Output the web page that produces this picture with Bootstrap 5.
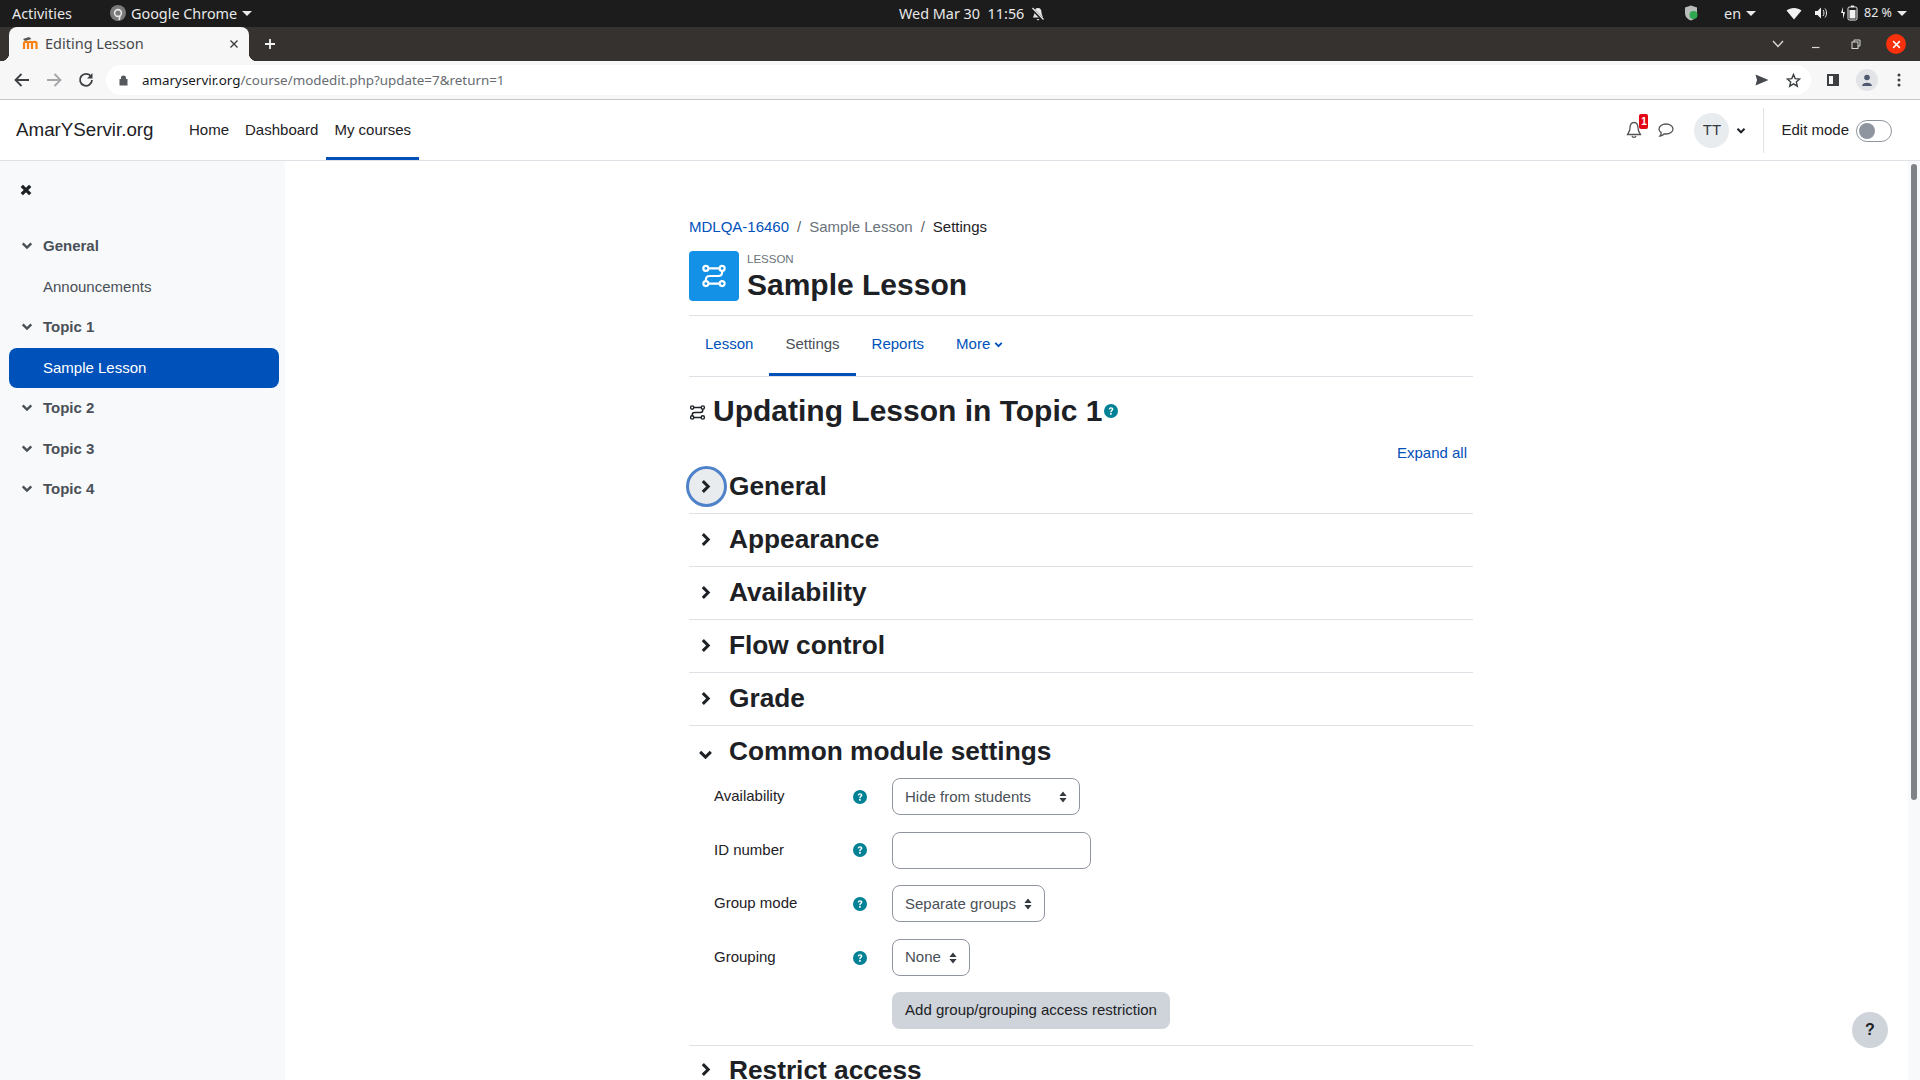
<!DOCTYPE html>
<html lang="en">
<head>
<meta charset="utf-8">
<title>Editing Lesson</title>
<link href="https://cdn.jsdelivr.net/npm/bootstrap@5.3.3/dist/css/bootstrap.min.css" rel="stylesheet">
<script src="https://cdn.jsdelivr.net/npm/bootstrap@5.3.3/dist/js/bootstrap.bundle.min.js"></script>
<style>
body { font-family: "Liberation Sans", Arial, sans-serif; font-size: 15px; color: #1d2125; background: #fff; overflow: hidden; width: 1920px; height: 1080px; }
a { text-decoration: none; color: #0051ba; }

/* desktop bar */
.os-bar { height: 27px; background: #1c1c1c; color: #e8e8e8; font-family: "Noto Sans", sans-serif; font-size: 14.4px; padding: 0 13px 0 12px; }
.os-left { width: 887px; }
.os-chrome-ico { margin-left: 38px; margin-right: 5px; }
.os-bell { margin-left: 6px; }
.os-caret { width: 0; height: 0; border-left: 5px solid transparent; border-right: 5px solid transparent; border-top: 5px solid #e8e8e8; display: inline-block; margin-left: 5px; }
.os-lang { margin-left: 26px; }
.os-gap-a { margin-left: 30px; }
.os-gap-b { margin-left: 12px; }
.os-batt-text { font-size: 12.5px; margin-left: 4px; }

/* browser chrome */
.tab-strip { height: 34px; background: #35322f; padding: 0 14px 0 9px; }
.browser-tab { width: 240px; height: 34px; background: #f7f7f7; border-radius: 8px 8px 0 0; color: #45474a; font-family: "Noto Sans", sans-serif; font-size: 14.5px; padding: 0 10px 0 13px; position: relative; }
.browser-tab::before, .browser-tab::after { content: ""; position: absolute; bottom: 0; width: 8px; height: 8px; }
.browser-tab::before { left: -8px; background: radial-gradient(circle at 0 0, #35322f 8px, #f7f7f7 8.5px); }
.browser-tab::after { right: -8px; background: radial-gradient(circle at 100% 0, #35322f 8px, #f7f7f7 8.5px); }
.tab-title { margin-left: 7px; }
.new-tab { margin-left: 15px; }
.win-min { margin-left: 27px; }
.win-max { margin-left: 30px; }
.win-close { width: 20px; height: 20px; border-radius: 50%; background: #f8300c; margin-left: 25px; }
.tool-row { height: 39px; background: #f7f7f7; border-bottom: 1px solid #c6c6c6; padding-left: 14px; }
.tool-fwd { margin-left: 16px; }
.tool-reload { margin-left: 16px; }
.omni { width: 1705px; height: 30px; margin-left: 12px; background: #fff; border-radius: 15px; padding: 0 10px 0 13px; font-family: "Noto Sans", sans-serif; font-size: 13.4px; color: #676b70; flex: none; }
.omni b { font-weight: 400; color: #15171a; }
.omni-url { margin-left: 14px; }
.omni-star { margin-left: 17px; }
.tool-panel { margin-left: 16px; }
.profile-dot { width: 22px; height: 22px; border-radius: 50%; background: #e3e4e8; margin-left: 17px; }
.tool-dots { margin-left: 19px; }

/* moodle navbar */
.top-nav { height: 61px; border-bottom: 1px solid #dee2e6; padding: 0 28px 0 16px; }
.site-name { font-size: 18.75px; color: #1d2125; width: 165px; }
.top-link { color: #1d2125; padding: 0 8px; height: 60px; display: flex; align-items: center; }
.top-link.on { border-bottom: 3px solid #0051ba; padding-top: 3px; }
.note-badge { position: absolute; left: 13px; top: -7px; width: 9px; height: 15px; background: #e30613; color: #fff; font-size: 10px; font-weight: 700; line-height: 15px; text-align: center; border-radius: 2px; }
.nav-chat { margin-left: 16px; }
.user-pic { width: 35px; height: 35px; border-radius: 50%; background: #e9ecef; color: #343a40; margin-left: 20px; }
.user-chev { margin-left: 7px; }
.bar-sep { width: 1px; height: 45px; background: #dee2e6; margin: 0 17px; }
.mode-switch { width: 36px; height: 22px; border: 1px solid #8f959e; border-radius: 11px; margin: 2px 0 0 7px; padding: 2px; }
.mode-knob { width: 16px; height: 16px; border-radius: 50%; background: #8f959e; }

/* layout */
.page-body { height: 919px; }
.side-drawer { width: 285px; background: #f8f9fa; padding: 0 6px 0 9px; color: #495057; }
.drawer-close { height: 65px; padding: 17px 0 0 11px; }
.drawer-row { height: 40.5px; display: flex; align-items: center; padding-left: 34px; position: relative; }
.drawer-row.topic { font-weight: 700; }
.drawer-row svg { position: absolute; left: 12px; top: 15px; }
.drawer-row.sel { background: #0051ba; color: #fff; border-radius: 8px; }
.page-scroll { width: 12px; background: #f8f9fa; position: relative; }
.page-thumb { position: absolute; left: 3px; top: 3px; width: 6px; height: 636px; background: #7f8387; border-radius: 3px; }
.page-main { flex: 1 1 auto; }
.page-col { width: 784px; margin-left: 404px; }

.crumb-trail { --bs-breadcrumb-margin-bottom: 17px; --bs-breadcrumb-item-active-color: #6a737b; padding-top: 57px; height: 90px; line-height: 18px; margin: 0; }
.crumb-trail .breadcrumb-item { color: #6a737b; }
.crumb-trail .crumb-now { color: #1d2125; }
.head-row { height: 65px; border-bottom: 1px solid #dee2e6; }
.mod-tile { width: 50px; height: 50px; background: #1391e6; border-radius: 4px; margin-right: 8px; }
.mod-kind { font-size: 11.5px; color: #6a737b; line-height: 12px; margin-top: 2px; }
.mod-name { font-size: 30px; font-weight: 700; line-height: 36px; margin: 2px 0 0; }
.sub-tabs { height: 61px; border-bottom: 1px solid #dee2e6; }
.sub-tabs a { padding: 0 16px 3px; height: 60px; display: flex; align-items: center; }
.sub-tabs a.on { color: #495057; border-bottom: 3px solid #0051ba; padding-bottom: 0; }
.more-chev { margin-left: 4px; }
.page-title { font-size: 30px; font-weight: 700; height: 66px; padding-top: 2px; margin: 0; }
.title-ico { margin: 3px 7px 0 0; color: #1d2125; }
.title-help { margin-left: 2px; }
.expand-line { height: 20px; padding-right: 6px; text-align: right; line-height: 20px; margin-bottom: -2px; }
.sect-row { height: 53px; display: flex; align-items: center; border-bottom: 1px solid #dee2e6; position: relative; font-size: 26.25px; font-weight: 700; padding-left: 40px; }
.sect-row .fold { position: absolute; left: 11px; top: 18px; }
.sect-row .fold-open { position: absolute; left: 9px; top: 23px; }
.sect-row.no-line { border-bottom: 0; padding-bottom: 2px; }
.sect-row.last-row { margin-top: -2px; padding-bottom: 0; }
.focus-ring { position: absolute; left: -3px; top: 5px; width: 41px; height: 41px; border-radius: 50%; background: #e9ecef; border: 3px solid #4e82c9; }

.field-list { margin-top: -9px; }
.field-row { height: 53.6px; display: flex; align-items: center; padding-left: 25px; }
.field-label { width: 139px; margin-top: -1px; }
.help-dot { width: 14px; height: 14px; margin-right: 25px; flex: none; }
.pick-box { height: 37px; font-size: 15px; color: #495057; border: 1px solid #8f959e; border-radius: 8px; padding: 0 12px; background-image: url("data:image/svg+xml,%3Csvg xmlns='http://www.w3.org/2000/svg' viewBox='0 0 8 12'%3E%3Cpath d='M4 .5 7.600 5H.4zM4 11.500.4 7h7.200z' fill='%23343a40'/%3E%3C/svg%3E"); background-position: right 12px center; background-size: 8px 12px; }
.pick-long { width: 188px; }
.pick-mid { width: 153px; }
.pick-short { width: 78px; }
.id-box { width: 199px; height: 37px; border: 1px solid #8f959e; border-radius: 8px; }
.restrict-line { height: 53px; padding-left: 203px; }
.restrict-btn { height: 37px; width: 278px; background: #ced4da; border: 0; color: #1d2125; border-radius: 8px; font-size: 15px; padding: 0 0 1px; }
.form-end { height: 9px; border-bottom: 1px solid #dee2e6; }
.help-round { position: fixed; left: 1852px; top: 1012px; width: 36px; height: 36px; border-radius: 50%; background: #ced4da; font-weight: 700; font-size: 16px; color: #1d2125; }
</style>
</head>
<body>
<svg width="0" height="0" class="position-absolute">
  <symbol id="chev-r" viewBox="0 0 10 14"><path d="M2.500 2 7.500 7 2.500 12" fill="none" stroke="currentColor" stroke-width="2.800"/></symbol>
  <symbol id="chev-d" viewBox="0 0 14 10"><path d="M2 2.500 7 7.500 12 2.500" fill="none" stroke="currentColor" stroke-width="2.800"/></symbol>
  <symbol id="route" viewBox="0 0 24 24"><g fill="none" stroke="currentColor" stroke-width="2"><circle cx="4.500" cy="5" r="2.300"/><circle cx="19.500" cy="5" r="2.300"/><circle cx="4.500" cy="19" r="2.300"/><circle cx="19.500" cy="19" r="2.300"/><path d="M6.800 5H17.200M6.800 19H17.200M19.500 7.300V8.500Q19.500 12 16 12H8Q4.500 12 4.500 15.500V16.700"/></g></symbol>
  <symbol id="help" viewBox="0 0 14 14"><circle cx="7" cy="7" r="7" fill="#008196"/><path d="M4.700 5.300C4.800 3.900 5.800 3.200 7.100 3.200 8.400 3.200 9.400 4 9.400 5.200 9.400 6.600 7.600 6.700 7.600 8.200H6.200C6.200 6.200 7.800 6.100 7.800 5.300 7.800 4.800 7.500 4.500 7 4.500 6.500 4.500 6.200 4.900 6.100 5.400ZM6.100 9.100H7.700V10.700H6.100Z" fill="#fff"/></symbol>
</svg>

<!-- desktop bar -->
<div class="os-bar d-flex align-items-center">
  <div class="os-left d-flex align-items-center">
    <span>Activities</span>
    <svg class="os-chrome-ico" width="16" height="16" viewBox="0 0 16 16"><circle cx="8" cy="8" r="8" fill="#7a7a7a"/><circle cx="8" cy="8" r="3.400" fill="none" stroke="#e8e8e8" stroke-width="1.600"/><path d="M10 11 9 15" stroke="#e8e8e8" stroke-width="1.600"/></svg>
    <span>Google Chrome</span>
    <i class="os-caret"></i>
  </div>
  <span>Wed Mar 30&nbsp; 11:56</span>
  <svg class="os-bell" width="16" height="16" viewBox="0 0 16 16"><path d="M8 2C5.500 2 4.500 4 4.500 6.500 4.500 9 3 10.500 3 11.500H13C13 10.500 11.500 9 11.500 6.500 11.500 4 10.500 2 8 2ZM6.500 13H9.500L8 14.500Z" fill="#e8e8e8"/><path d="M2.500 3 13.500 14.500" stroke="#1c1c1c" stroke-width="3"/><path d="M2.500 2 13.500 13.500" stroke="#e8e8e8" stroke-width="1.300"/></svg>
  <div class="ms-auto d-flex align-items-center">
    <svg width="14" height="16" viewBox="0 0 14 16"><path d="M7 .5 13 2.500V8C13 11.500 10.500 14.500 7 15.500 3.500 14.500 1 11.500 1 8V2.500Z" fill="#b9bdb9"/><circle cx="9.500" cy="10" r="4" fill="#2fa84f"/></svg>
    <span class="os-lang">en</span><i class="os-caret"></i>
    <svg class="os-gap-a" width="16" height="13" viewBox="0 0 16 13"><path d="M.5 3.500C4.500 0 11.500 0 15.500 3.500L8 12.500Z" fill="#f2f2f2"/></svg>
    <svg class="os-gap-b" width="14" height="14" viewBox="0 0 14 14"><path d="M1 5H3.500L7 1.500V12.500L3.500 9H1Z" fill="#f2f2f2"/><path d="M9 4C10.300 5.500 10.300 8.500 9 10M11 2.500C13 5 13 9 11 11.500" stroke="#f2f2f2" fill="none"/></svg>
    <svg class="os-gap-b" width="20" height="16" viewBox="0 0 20 16"><path d="M3 2 1 8H3V14L5 7H3Z" fill="#f2f2f2"/><rect x="8" y="2" width="9" height="13" rx="1.500" fill="none" stroke="#f2f2f2"/><rect x="9.500" y="5" width="6" height="8.500" fill="#f2f2f2"/><rect x="11" y=".5" width="3" height="1.500" fill="#f2f2f2"/></svg>
    <span class="os-batt-text">82 %</span><i class="os-caret"></i>
  </div>
</div>

<!-- tab strip -->
<div class="tab-strip d-flex align-items-center">
  <div class="browser-tab d-flex align-items-center">
    <svg width="16" height="14" viewBox="0 0 16 14"><path d="M1 2 7 0 9.500 2 3 4Z" fill="#555"/><path d="M2 12V6C2 4.500 6 4.500 6 6V12M6 6C6 4.500 10 4.500 10 6V12M10 6C10 4.500 14.500 4.500 14.500 6V12" fill="none" stroke="#f98012" stroke-width="2.200"/></svg>
    <span class="tab-title">Editing Lesson</span>
    <svg class="ms-auto" width="10" height="10" viewBox="0 0 10 10"><path d="M1.500 1.500 8.500 8.500M8.500 1.500 1.500 8.500" stroke="#3c3c3c" stroke-width="1.400"/></svg>
  </div>
  <svg class="new-tab" width="12" height="12" viewBox="0 0 12 12"><path d="M6 1V11M1 6H11" stroke="#f2f2f2" stroke-width="1.800"/></svg>
  <div class="ms-auto d-flex align-items-center">
    <svg width="12" height="8" viewBox="0 0 12 8"><path d="M1 1 6 6.500 11 1" fill="none" stroke="#d8d8d8" stroke-width="1.400"/></svg>
    <svg class="win-min" width="10" height="10" viewBox="0 0 10 10"><path d="M1 8.500H8.500" stroke="#d8d8d8" stroke-width="1.200"/></svg>
    <svg class="win-max" width="10" height="10" viewBox="0 0 10 10"><rect x="1" y="3" width="6" height="6.500" fill="none" stroke="#d8d8d8"/><path d="M3 3V1H9V7H7" fill="none" stroke="#d8d8d8"/></svg>
    <div class="win-close d-flex align-items-center justify-content-center"><svg width="9" height="9" viewBox="0 0 8 8"><path d="M1 1 7 7M7 1 1 7" stroke="#fff" stroke-width="1.300"/></svg></div>
  </div>
</div>

<!-- toolbar -->
<div class="tool-row d-flex align-items-center">
  <svg width="16" height="14" viewBox="0 0 16 14"><path d="M7.500 1 1.500 7 7.500 13M1.500 7H15" fill="none" stroke="#3c4043" stroke-width="1.800"/></svg>
  <svg class="tool-fwd" width="16" height="14" viewBox="0 0 16 14"><path d="M8.500 1 14.500 7 8.500 13M14.500 7H1" fill="none" stroke="#a4a6a9" stroke-width="1.800"/></svg>
  <svg class="tool-reload" width="16" height="16" viewBox="0 0 16 16"><path d="M13 4.500A6 6 0 1 0 14 8" fill="none" stroke="#3c4043" stroke-width="1.800"/><path d="M14.500 1V6.500H9Z" fill="#3c4043"/></svg>
  <div class="omni d-flex align-items-center">
    <svg width="9" height="12" viewBox="0 0 9 12"><path d="M2 5V3.500C2 .7 7 .7 7 3.500V5H8.500V11.500H.5V5Z" fill="#55585c"/></svg>
    <span class="omni-url"><b>amaryservir.org</b>/course/modedit.php?update=7&amp;return=1</span>
    <svg class="ms-auto" width="14" height="12" viewBox="0 0 14 12"><path d="M.5 .5 13.500 6 .5 11.500 2 6Z" fill="#45484c"/></svg>
    <svg class="omni-star" width="15" height="15" viewBox="0 0 15 15"><path d="M7.500 1.500 9.200 5.600 13.600 6 10.300 8.900 11.300 13.200 7.500 10.900 3.700 13.200 4.700 8.900 1.400 6 5.800 5.600Z" fill="none" stroke="#3c4043" stroke-width="1.400"/></svg>
  </div>
  <svg class="tool-panel" width="12" height="12" viewBox="0 0 12 12"><rect x="1" y="1" width="10" height="10" fill="none" stroke="#3c4043" stroke-width="2"/><rect x="6" y="1" width="5" height="10" fill="#3c4043"/></svg>
  <div class="profile-dot d-flex align-items-center justify-content-center"><svg width="12" height="12" viewBox="0 0 12 12"><circle cx="6" cy="3.500" r="2.800" fill="#4f5a70"/><path d="M1 12C1 7.500 11 7.500 11 12Z" fill="#4f5a70"/></svg></div>
  <svg class="tool-dots" width="4" height="14" viewBox="0 0 4 14"><circle cx="2" cy="2" r="1.500" fill="#3c4043"/><circle cx="2" cy="7" r="1.500" fill="#3c4043"/><circle cx="2" cy="12" r="1.500" fill="#3c4043"/></svg>
</div>

<!-- site nav -->
<nav class="top-nav d-flex align-items-center">
  <a class="site-name" href="#">AmarYServir.org</a>
  <a class="top-link" href="#">Home</a>
  <a class="top-link" href="#">Dashboard</a>
  <a class="top-link on" href="#">My courses</a>
  <div class="ms-auto d-flex align-items-center">
    <span class="position-relative d-inline-flex">
      <svg width="16" height="18" viewBox="0 0 16 18"><path d="M8 1.500C5 1.500 4 4 4 7 4 10.500 2 12 1.500 13.500H14.500C14 12 12 10.500 12 7 12 4 11 1.500 8 1.500ZM6 15C6.500 16.800 9.500 16.800 10 15" fill="none" stroke="#555" stroke-width="1.300"/></svg>
      <span class="note-badge">1</span>
    </span>
    <svg class="nav-chat" width="16" height="16" viewBox="0 0 16 16"><path d="M8 2C4 2 1 4.200 1 7 1 8.500 1.800 9.700 3.200 10.600 3.200 12 2.700 13.200 2 14 3.800 13.800 5.200 13 6 12 6.600 12 7.300 12 8 12 12 12 15 9.800 15 7 15 4.200 12 2 8 2Z" fill="none" stroke="#555" stroke-width="1.300"/></svg>
    <div class="user-pic d-flex align-items-center justify-content-center">TT</div>
    <svg class="user-chev" width="10" height="7" viewBox="0 0 14 10"><use href="#chev-d"/></svg>
    <div class="bar-sep"></div>
    <span>Edit mode</span>
    <div class="mode-switch"><div class="mode-knob"></div></div>
  </div>
</nav>

<div class="page-body d-flex">
  <aside class="side-drawer flex-shrink-0">
    <div class="drawer-close"><svg width="12" height="12" viewBox="0 0 12 12"><path d="M1.800 1.800 10.200 10.200M10.200 1.800 1.800 10.200" stroke="#1d2125" stroke-width="3.300"/></svg></div>
    <div class="drawer-row topic"><svg width="12" height="9" viewBox="0 0 14 10"><use href="#chev-d"/></svg>General</div>
    <div class="drawer-row">Announcements</div>
    <div class="drawer-row topic"><svg width="12" height="9" viewBox="0 0 14 10"><use href="#chev-d"/></svg>Topic 1</div>
    <div class="drawer-row sel">Sample Lesson</div>
    <div class="drawer-row topic"><svg width="12" height="9" viewBox="0 0 14 10"><use href="#chev-d"/></svg>Topic 2</div>
    <div class="drawer-row topic"><svg width="12" height="9" viewBox="0 0 14 10"><use href="#chev-d"/></svg>Topic 3</div>
    <div class="drawer-row topic"><svg width="12" height="9" viewBox="0 0 14 10"><use href="#chev-d"/></svg>Topic 4</div>
  </aside>

  <main class="page-main">
    <div class="page-col">
      <ol class="breadcrumb crumb-trail">
        <li class="breadcrumb-item"><a href="#">MDLQA-16460</a></li>
        <li class="breadcrumb-item">Sample Lesson</li>
        <li class="breadcrumb-item crumb-now">Settings</li>
      </ol>
      <div class="head-row d-flex align-items-start">
        <div class="mod-tile d-flex align-items-center justify-content-center text-white"><svg width="26" height="26"><use href="#route"/></svg></div>
        <div>
          <div class="mod-kind">LESSON</div>
          <h1 class="mod-name">Sample Lesson</h1>
        </div>
      </div>
      <div class="sub-tabs d-flex">
        <a href="#">Lesson</a>
        <a class="on" href="#">Settings</a>
        <a href="#">Reports</a>
        <a href="#">More<svg class="more-chev" width="9" height="7" viewBox="0 0 14 10"><use href="#chev-d"/></svg></a>
      </div>
      <h2 class="page-title d-flex align-items-center">
        <svg class="title-ico" width="17" height="17"><use href="#route"/></svg>Updating Lesson in Topic 1<svg class="title-help" width="14" height="14"><use href="#help"/></svg>
      </h2>
      <div class="expand-line"><a href="#">Expand all</a></div>

      <div class="sect-row"><span class="focus-ring"></span><svg class="fold" width="11" height="15"><use href="#chev-r"/></svg>General</div>
      <div class="sect-row"><svg class="fold" width="11" height="15"><use href="#chev-r"/></svg>Appearance</div>
      <div class="sect-row"><svg class="fold" width="11" height="15"><use href="#chev-r"/></svg>Availability</div>
      <div class="sect-row"><svg class="fold" width="11" height="15"><use href="#chev-r"/></svg>Flow control</div>
      <div class="sect-row"><svg class="fold" width="11" height="15"><use href="#chev-r"/></svg>Grade</div>
      <div class="sect-row no-line"><svg class="fold-open" width="15" height="11"><use href="#chev-d"/></svg>Common module settings</div>

      <div class="field-list">
        <div class="field-row">
          <label class="field-label">Availability</label><svg class="help-dot"><use href="#help"/></svg>
          <select class="form-select pick-box pick-long"><option>Hide from students</option></select>
        </div>
        <div class="field-row">
          <label class="field-label">ID number</label><svg class="help-dot"><use href="#help"/></svg>
          <input class="form-control id-box" type="text">
        </div>
        <div class="field-row">
          <label class="field-label">Group mode</label><svg class="help-dot"><use href="#help"/></svg>
          <select class="form-select pick-box pick-mid"><option>Separate groups</option></select>
        </div>
        <div class="field-row">
          <label class="field-label">Grouping</label><svg class="help-dot"><use href="#help"/></svg>
          <select class="form-select pick-box pick-short"><option>None</option></select>
        </div>
        <div class="restrict-line d-flex align-items-center"><button class="btn restrict-btn" type="button">Add group/grouping access restriction</button></div>
      </div>
      <div class="form-end"></div>
      <div class="sect-row no-line last-row"><svg class="fold" width="11" height="15"><use href="#chev-r"/></svg>Restrict access</div>
    </div>
    <div class="help-round d-flex align-items-center justify-content-center">?</div>
  </main>
  <div class="page-scroll flex-shrink-0"><div class="page-thumb"></div></div>
</div>
</body>
</html>
